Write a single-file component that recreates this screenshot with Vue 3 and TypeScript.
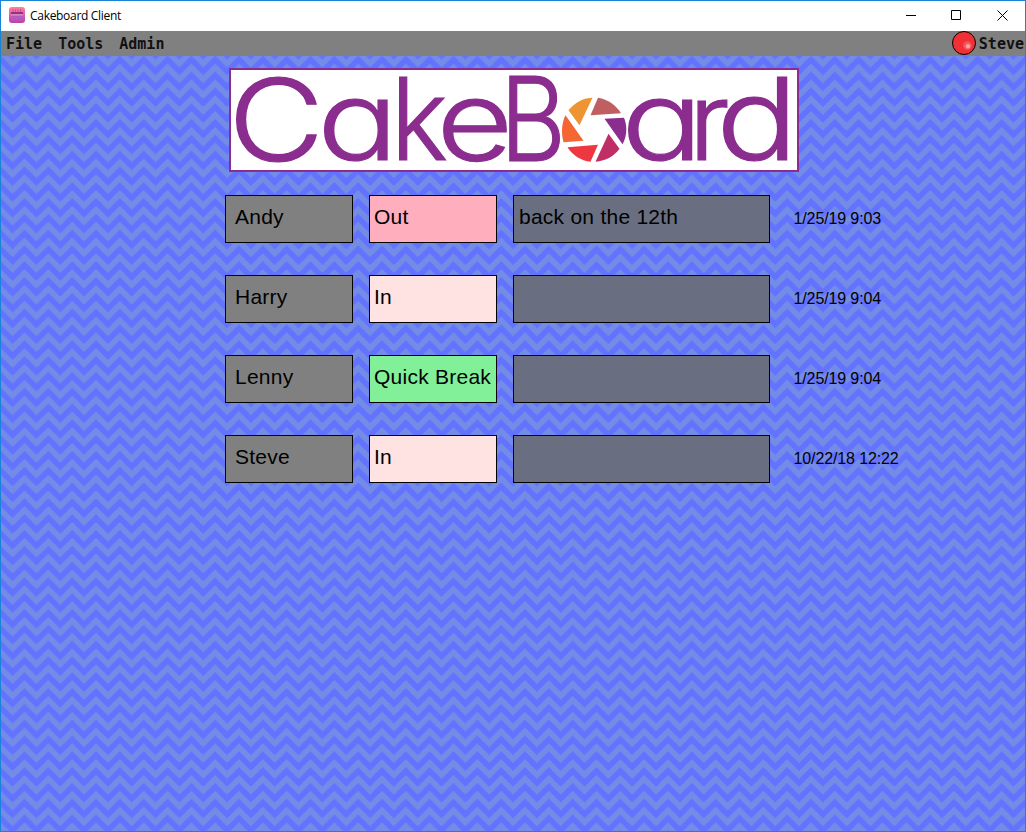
<script setup lang="ts">
interface Row { name: string; status: string; tone: string; note: string; time: string }
interface Glyph { ch: string; x: number; y: number; sx: number; sy: number }

const menus: string[] = ['File', 'Tools', 'Admin']
const rows: Row[] = [
  { name: 'Andy', status: 'Out', tone: 'out', note: 'back on the 12th', time: '1/25/19 9:03' },
  { name: 'Harry', status: 'In', tone: 'in', note: '', time: '1/25/19 9:04' },
  { name: 'Lenny', status: 'Quick Break', tone: 'break', note: '', time: '1/25/19 9:04' },
  { name: 'Steve', status: 'In', tone: 'in', note: '', time: '10/22/18 12:22' },
]
// Wordmark letters: baseline origin and per-letter stretch
const glyphs: Glyph[] = [
  { ch: 'C', x: -0.7, y: 92.6, sx: 1.115, sy: 0.965 },
  { ch: 'a', x: 88.3, y: 92.2, sx: 1.14, sy: 0.935 },
  { ch: 'k', x: 161.5, y: 92.2, sx: 0.92, sy: 0.965 },
  { ch: 'e', x: 207.4, y: 92.2, sx: 1.12, sy: 0.935 },
  { ch: 'B', x: 271, y: 93, sx: 0.86, sy: 0.99 },
  { ch: 'a', x: 392.3, y: 92.2, sx: 1.15, sy: 0.935 },
  { ch: 'r', x: 459.5, y: 92.2, sx: 0.97, sy: 0.92 },
  { ch: 'd', x: 487.3, y: 92.2, sx: 1.15, sy: 0.97 },
]
</script>

<template>
  <div class="window">
    <header class="titlebar">
      <svg class="app-icon" width="16" height="16" viewBox="0 0 16 16">
        <defs>
          <linearGradient id="cake" x1="0" y1="0" x2="0" y2="1">
            <stop offset="0" stop-color="#ff7f9a" />
            <stop offset="1" stop-color="#b93fae" />
          </linearGradient>
        </defs>
        <rect width="16" height="16" rx="3" fill="url(#cake)" />
        <path d="M4 2v3M6.500 2v3M9 2v3M11.500 2v3" stroke="#d0558f" stroke-width="1" />
        <rect x="2" y="5" width="12" height="2.500" fill="#9b2f86" />
        <rect x="2" y="7.500" width="12" height="1" fill="#efc3e6" />
        <rect x="2" y="8.500" width="12" height="4" fill="#b25cc0" />
      </svg>
      <span class="title">Cakeboard Client</span>
      <svg class="controls" width="137" height="30" viewBox="0 0 137 30" fill="none" stroke="#000">
        <path d="M18 14.500H28M63.500 9.500h9v9h-9zM109.500 9.500l10 10M119.500 9.500l-10 10" />
      </svg>
    </header>
    <nav class="menubar">
      <span v-for="m in menus" :key="m" class="menu">{{ m }}</span>
      <span class="user">
        <svg width="24" height="24" viewBox="0 0 24 24">
          <circle cx="12" cy="12" r="11.500" fill="#f03035" stroke="#000" />
          <circle cx="15.300" cy="14.500" r="4.200" fill="#f4565b" />
          <circle cx="16" cy="15.300" r="2.200" fill="#f9a2a4" />
        </svg>
        <span class="menu">Steve</span>
      </span>
    </nav>
    <main class="board">
      <svg class="chevrons" width="1024" height="776">
        <defs>
          <pattern id="zigzag" width="24" height="16" patternUnits="userSpaceOnUse" patternTransform="translate(-0.300 -4.300) scale(0.9930 0.9880)">
            <rect width="24" height="16" fill="#6372ff" />
            <path d="M-12 -4L0 -16L12 -4L24 -16L36 -4M-12 12L0 0L12 12L24 0L36 12M-12 28L0 16L12 28L24 16L36 28" fill="none" stroke="#738ce6" stroke-width="5.660" />
          </pattern>
        </defs>
        <rect width="1024" height="776" fill="url(#zigzag)" />
      </svg>
      <svg class="logo" width="570" height="104" viewBox="0 0 570 104">
        <rect x="1" y="1" width="568" height="102" fill="#fff" stroke="#8b2c8f" stroke-width="2" />
        <text v-for="(g, i) in glyphs" :key="i" class="glyph" :transform="`translate(${g.x} ${g.y}) scale(${g.sx} ${g.sy})`">{{ g.ch }}</text>
        <g transform="translate(321 -11.800)">
          <path d="M18.500 54C25 46 34 41.500 42.500 41.500L29.500 69z" fill="#ef9433" />
          <path d="M48 41.500C58 43 66 49 71 57L40.500 59z" fill="#c05f62" />
          <path d="M54.500 62.500L74 61.500C77.500 70 77 80 72.500 88z" fill="#8b2c8f" />
          <path d="M58.500 77.500L69.500 92.500C64 100 56 104.500 45.500 105.500z" fill="#c02e66" />
          <path d="M17.500 91L48 88.500L40.500 105.500C31 104.500 22.500 99 17.500 91z" fill="#ef3742" />
          <path d="M15.500 59L33.500 84.500L13.500 86C11 77 11.500 67 15.500 59z" fill="#f46633" />
        </g>
      </svg>
      <section class="rows">
        <div v-for="r in rows" :key="r.name" class="row">
          <div class="cell name">{{ r.name }}</div>
          <div class="cell" :class="r.tone">{{ r.status }}</div>
          <div class="cell note">{{ r.note }}</div>
          <time class="time">{{ r.time }}</time>
        </div>
      </section>
    </main>
  </div>
</template>

<style scoped>
.window { box-sizing: border-box; width: 1026px; height: 832px; border: 1px solid #1883d7; display: flex; flex-direction: column; background: #fff; overflow: hidden; }
.titlebar { height: 30px; display: flex; align-items: center; padding-left: 8px; flex: none; }
.app-icon { margin-top: -2px; }
.title { margin-left: 5px; margin-top: -1px; font: 12px "Open Sans", "Noto Sans", sans-serif; letter-spacing: -0.300px; color: #000; }
.controls { margin-left: auto; }
.menubar { height: 25px; flex: none; background: #808080; display: flex; align-items: center; padding-left: 5px; gap: 16px; font: bold 15px/25px "DejaVu Sans Mono", monospace; color: #111; }
.menu { padding-top: 2px; line-height: 23px; }
.user { margin-left: auto; margin-right: 1px; display: flex; align-items: center; gap: 3px; }
.user svg { margin-top: -1px; }
.board { position: relative; flex: 1; display: flex; flex-direction: column; overflow: hidden; }
.chevrons { position: absolute; left: 0; top: 0; }
.logo { position: relative; margin: 12px 0 0 228px; flex: none; overflow: visible; }
.glyph { font-family: Inter, sans-serif; font-weight: 300; font-size: 118px; font-feature-settings: "cv11" 1; fill: #8b2c8f; stroke: #8b2c8f; stroke-width: 1.200px; }
.rows { position: relative; margin: 23px 0 0 224px; display: flex; flex-direction: column; gap: 32px; }
.row { display: grid; grid-template-columns: 128px 128px 257px auto; column-gap: 16px; height: 48px; }
.cell { box-sizing: border-box; border: 1px solid #000; padding-left: 4px; font: 21px/42px "Liberation Sans", Arial, sans-serif; letter-spacing: 0.250px; color: #000; white-space: nowrap; }
.name { background: #808080; padding-left: 9px; }
.out { background: #ffaebd; }
.in { background: #ffe2e2; }
.break { background: #82f098; }
.note { background: #696f80; padding-left: 5px; }
.time { font: 16px/48px "Liberation Sans", Arial, sans-serif; letter-spacing: -0.120px; padding-left: 7.500px; color: #000; white-space: nowrap; }
</style>

<style>
body { margin: 0; overflow: hidden; }
</style>
